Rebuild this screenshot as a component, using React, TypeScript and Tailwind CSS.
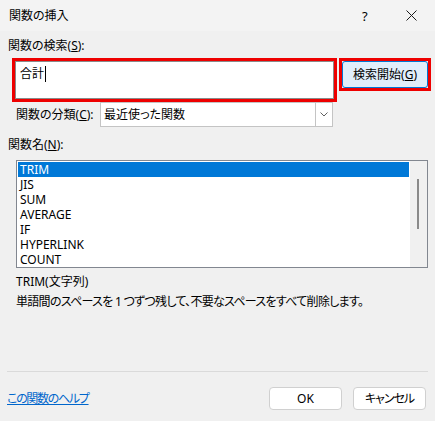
export default function App() {
  const items = ["TRIM", "JIS", "SUM", "AVERAGE", "IF", "HYPERLINK", "COUNT"];
  return (
    <div className="w-[435px] h-[421px] bg-[#f0f0f0] text-black text-[12px] leading-[16px] font-['Noto_Sans','Noto_Sans_CJK_JP',sans-serif] [font-feature-settings:'palt'] flex flex-col overflow-hidden">
      {/* Title bar */}
      <div className="h-[31px] bg-[#f3f3f3] flex items-center pl-[9px] shrink-0">
        <span className="flex-1">関数の挿入</span>
        <span className="w-[10px] text-[13px] mr-[34px]">?</span>
        <svg width="11" height="11" viewBox="0 0 11 11" className="mr-[18px]">
          <path d="M0.5 0.5 L10.5 10.5 M10.5 0.5 L0.5 10.5" stroke="#1a1a1a" strokeWidth="1" />
        </svg>
      </div>

      {/* Search */}
      <div className="pl-[8px] mt-[7px]">
        関数の検索(<span className="underline">S</span>):
      </div>
      <div className="flex mt-[4px] ml-[12px]">
        <div className="w-[325px] h-[44px] border-[3px] border-[#ee0000]">
          <div className="w-full h-full border border-[#8a8a8a] bg-white px-[4px] pt-[4px] flex items-start">
            <span>合計</span>
            <span className="w-px h-[16px] bg-black ml-px" />
          </div>
        </div>
        <div className="ml-[2px] w-[92px] h-[33px] border-[3px] border-[#ee0000]">
          <div className="w-full h-full rounded-[3px] border border-[#0078d4] bg-[#e1eefa] flex items-center justify-center">
            検索開始(<span className="underline">G</span>)
          </div>
        </div>
      </div>

      {/* Category */}
      <div className="flex items-center">
        <span className="pl-[16px] w-[100px]">
          関数の分類(<span className="underline">C</span>):
        </span>
        <div className="w-[233px] h-[25px] bg-white border border-[#c4c4c4] flex">
          <span className="flex-1 flex items-center pl-[3px]">最近使った関数</span>
          <span className="w-[17px] border-l border-[#c4c4c4] flex items-center justify-center">
            <svg width="8" height="5" viewBox="0 0 8 5">
              <path d="M0.5 0.5 L4 4 L7.5 0.5" stroke="#606060" strokeWidth="1" fill="none" />
            </svg>
          </span>
        </div>
      </div>

      {/* Function list */}
      <div className="pl-[8px] mt-[10px]">
        関数名(<span className="underline">N</span>):
      </div>
      <div className="ml-[16px] mt-[7px] w-[412px] h-[108px] border border-[#828790] flex">
        <div className="flex-1 bg-white pt-px pl-px pr-px">
          {items.map((name, i) => (
            <div
              key={name}
              className={
                i === 0
                  ? "h-[15px] leading-[15px] pl-[2px] bg-[#0078d7] text-white"
                  : "h-[15px] leading-[15px] pl-[2px]"
              }
            >
              {name}
            </div>
          ))}
        </div>
        <div className="w-[17px] bg-[#f0f0f0] relative">
          <div className="absolute left-[7px] top-[18px] w-[2px] h-[50px] bg-[#8a8a8a]" />
        </div>
      </div>

      {/* Description */}
      <div className="pl-[16px] mt-[6px]">TRIM(文字列)</div>
      <div className="pl-[16px] mt-[4px] tracking-[-0.7px]">
        単語間のスペースを 1 つずつ残して、不要なスペースをすべて削除します。
      </div>

      {/* Footer */}
      <div className="mx-[7px] mt-[61px] h-px bg-[#dadada]" />
      <div className="flex items-center mt-[15px] pl-[7px] pr-[9px]">
        <span className="flex-1">
          <span className="text-[#0066cc] underline tracking-[-1.3px]">この関数のヘルプ</span>
        </span>
        <button className="w-[73px] h-[23px] bg-white border border-[#d0d0d0] rounded-[4px]">OK</button>
        <button className="w-[73px] h-[23px] ml-[11px] bg-white border border-[#d0d0d0] rounded-[4px] tracking-[-1px]">
          キャンセル
        </button>
      </div>
    </div>
  );
}
